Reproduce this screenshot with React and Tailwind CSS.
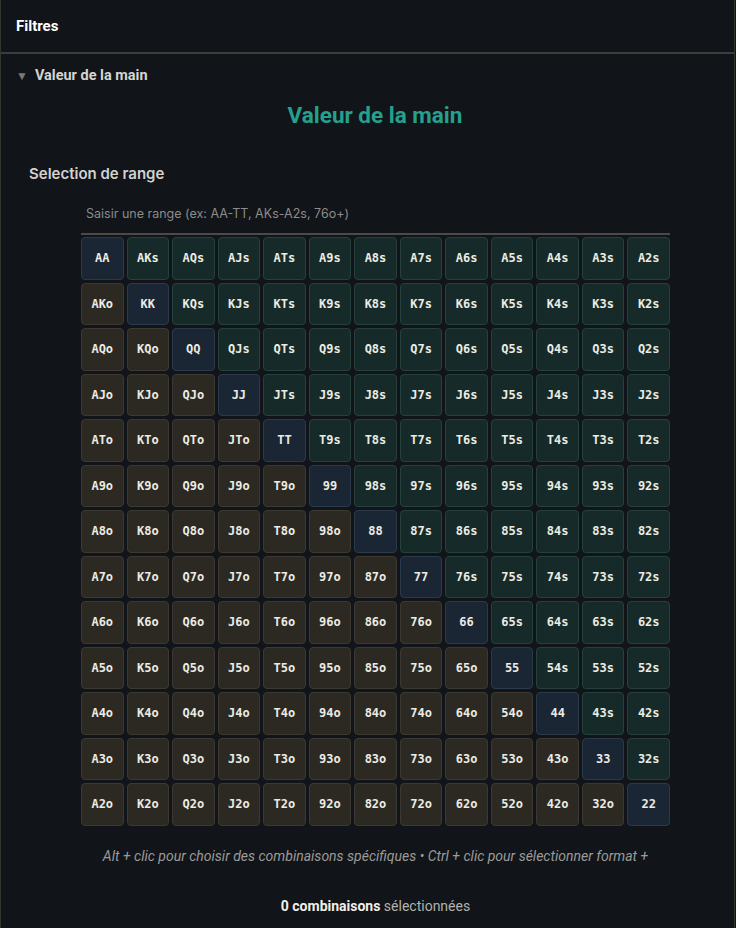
const ranks = ['A', 'K', 'Q', 'J', 'T', '9', '8', '7', '6', '5', '4', '3', '2'];

function handLabel(i, j) {
  if (i === j) return ranks[i] + ranks[j];
  if (i < j) return ranks[i] + ranks[j] + 's';
  return ranks[j] + ranks[i] + 'o';
}

function cellClass(i, j) {
  if (i === j) return 'bg-[#1a2634] border-[#2b3a4b]';
  if (i < j) return 'bg-[#162b29] border-[#26403b]';
  return 'bg-[#2b2922] border-[#3b3931]';
}

export default function App() {
  return (
    <div className="min-h-screen bg-[#111418] text-white" style={{ fontFamily: 'Roboto, "Liberation Sans", sans-serif' }}>
      <div className="min-h-screen w-[735px] border-x border-[#35352f]">
        <header className="flex h-[54px] items-center border-b-2 border-[#3d3d39] px-[15px]">
          <h1 className="text-[15px] font-bold text-white">Filtres</h1>
        </header>

        <div className="flex h-[42px] items-center gap-[7px] px-[15px] pt-[2px]">
          <span className="text-[12px] leading-none text-[#7a7a78]">▼</span>
          <span className="text-[14.5px] font-bold text-[#d6d5cf]">Valeur de la main</span>
        </div>

        <h2 className="mt-[5px] pl-[15px] text-center text-[22.5px] font-bold leading-[28px] text-[#26a08e]">Valeur de la main</h2>

        <section className="px-7 pt-[35px]">
          <h3
            className="text-[15px] font-semibold leading-[20px] text-[#d2d2d0]"
            style={{ fontFamily: 'Inter, "Noto Sans", sans-serif' }}
          >
            Selection de range
          </h3>

          <div className="ml-[52px] mt-[15px] w-[589px]">
            <input
              type="text"
              placeholder="Saisir une range (ex: AA-TT, AKs-A2s, 76o+)"
              className="h-[36px] w-full border-b-2 border-[#4a4a48] bg-transparent pb-[5px] pl-[5px] text-[12.5px] text-white outline-none placeholder:text-[#8c8c8a]"
              style={{ fontFamily: 'Inter, "Noto Sans", sans-serif' }}
            />

            <div className="mt-[2px] grid gap-[3px]" style={{ gridTemplateColumns: 'repeat(13, minmax(0, 1fr))' }}>
              {ranks.map((_, i) =>
                ranks.map((__, j) => (
                  <button
                    key={handLabel(i, j)}
                    className={`flex h-[42.5px] items-center justify-center rounded-[4px] border text-[12px] font-bold text-[#ecebe4] ${cellClass(i, j)}`}
                    style={{ fontFamily: '"DejaVu Sans Mono", "Liberation Mono", monospace' }}
                  >
                    {handLabel(i, j)}
                  </button>
                ))
              )}
            </div>

            <p className="mt-[20px] whitespace-nowrap text-center text-[14px] italic text-[#9b9b99]">
              Alt + clic pour choisir des combinaisons spécifiques • Ctrl + clic pour sélectionner format +
            </p>

            <p className="mt-[29px] text-center text-[14px] text-[#b3b2ac]">
              <span className="font-bold text-[#f0efe9]">0 combinaisons</span> sélectionnées
            </p>
          </div>
        </section>
      </div>
    </div>
  );
}
